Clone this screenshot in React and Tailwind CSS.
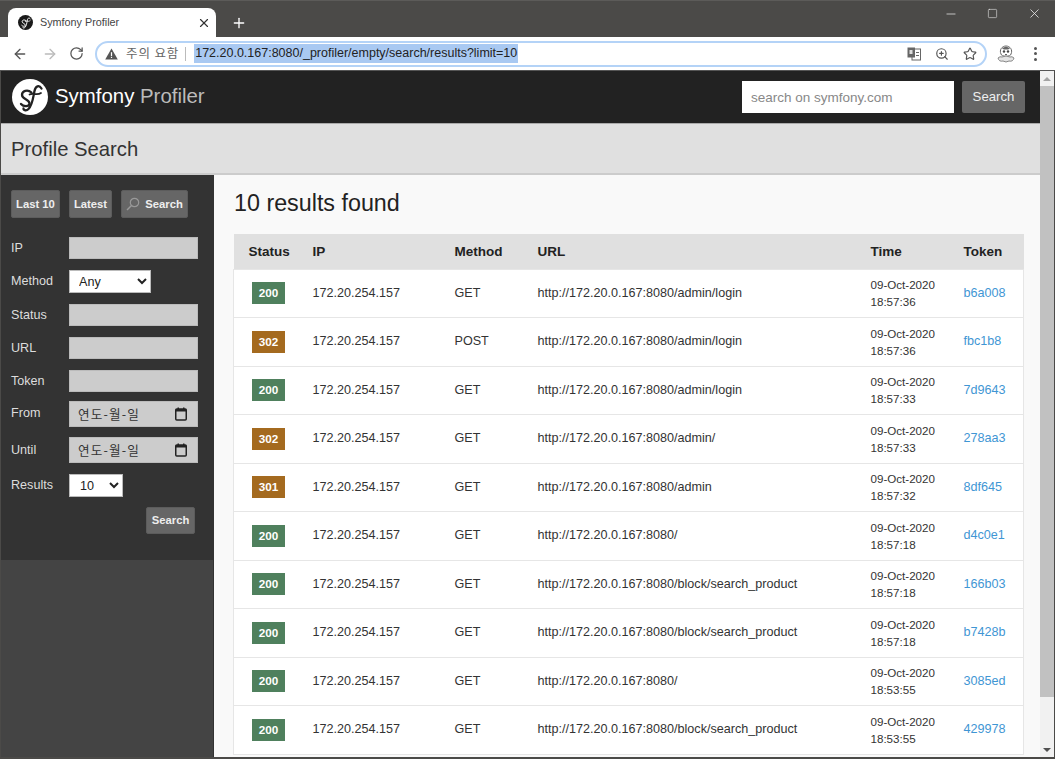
import { ArrowLeft, ArrowRight, RotateCw, Star, X, Plus, Minus, Square, ZoomIn } from "lucide-react";

const rows = [
  ["200", "GET", "/admin/login", "18:57:36", "b6a008"],
  ["302", "POST", "/admin/login", "18:57:36", "fbc1b8"],
  ["200", "GET", "/admin/login", "18:57:33", "7d9643"],
  ["302", "GET", "/admin/", "18:57:33", "278aa3"],
  ["301", "GET", "/admin", "18:57:32", "8df645"],
  ["200", "GET", "/", "18:57:18", "d4c0e1"],
  ["200", "GET", "/block/search_product", "18:57:18", "166b03"],
  ["200", "GET", "/block/search_product", "18:57:18", "b7428b"],
  ["200", "GET", "/", "18:53:55", "3085ed"],
  ["200", "GET", "/block/search_product", "18:53:55", "429978"],
];

function SfLogo({ size, dark }) {
  const bg = dark ? "#1a1a1a" : "#fff";
  const fg = dark ? "#fff" : "#222";
  return (
    <svg width={size} height={size} viewBox="0 0 36 36" className="shrink-0">
      <circle cx="18" cy="18" r="18" fill={bg} />
      <g fill="none" stroke={fg} strokeLinecap="round">
        <path d="M29.5 9.5 C27 5.5 23.5 7 22.5 12 C21 19 20.5 26 16.5 30 C14.5 32 11.5 31.5 11.5 29.5" strokeWidth="2.3" />
        <path d="M17.5 15.5 C21 13.5 25 17 29 14" strokeWidth="1.7" />
        <path d="M19.5 13.5 C15.5 10 10 12 10 16 C10 20.5 17.5 20 17.5 24.5 C17.5 28 11.5 28 9 25" strokeWidth="2.3" />
      </g>
    </svg>
  );
}

function ChromeBar() {
  return (
    <div className="shrink-0 font-['Liberation_Sans',sans-serif]">
      <div className="h-[37px] bg-[#4b4a48] border-t border-[#5c5b59] flex items-end pl-[8px] text-white">
        <div className="w-[208px] h-[29px] bg-white rounded-t-lg flex items-center pl-[10px] pr-[5px] text-[#444]">
          <SfLogo size={15} dark />
          <span className="ml-[7px] text-[10.8px] flex-1">Symfony Profiler</span>
          <X size={14} strokeWidth={2} className="text-[#333]" />
        </div>
        <Plus size={16} strokeWidth={2} className="ml-[15px] mb-[6px]" />
        <div className="ml-auto self-start flex items-center gap-[29px] pr-[13px] pt-[5px] text-[#eee]">
          <Minus size={14} strokeWidth={1.25} />
          <Square size={11} strokeWidth={1.25} />
          <X size={15} strokeWidth={1.25} />
        </div>
      </div>
      <div className="h-[34px] bg-white flex items-center pl-[12px] pr-[18px] border-b border-[#555]">
        <ArrowLeft size={16} strokeWidth={2} className="text-[#555]" />
        <ArrowRight size={16} strokeWidth={2} className="text-[#bbb] ml-[14px]" />
        <RotateCw size={15} strokeWidth={2} className="text-[#555] ml-[11px]" />
        <div className="ml-[11px] flex-1 h-[26px] rounded-full border-2 border-[#b4d3f7] flex items-center pl-[8px] pr-[8px]">
          <svg width="13" height="12" viewBox="0 0 13 12" className="shrink-0">
            <path d="M6.5 0.5 L12.8 11.5 H0.2 Z" fill="#555" />
            <rect x="5.9" y="4.2" width="1.2" height="3.8" fill="#fff" />
            <rect x="5.9" y="8.8" width="1.2" height="1.2" fill="#fff" />
          </svg>
          <span className="ml-[8px] text-[12.5px] tracking-[0.07em] text-[#666] font-['Noto_Sans_CJK_KR',sans-serif] leading-none whitespace-nowrap">주의 요함</span>
          <div className="ml-[6px] w-px h-[14px] bg-[#bbb]" />
          <span className="ml-[8px] text-[12.5px] leading-[19px] px-px bg-[#a9c9f2] text-[#222] whitespace-nowrap">
            172.20.0.167:8080/_profiler/empty/search/results?limit=10
          </span>
          <div className="ml-auto flex items-center gap-[14px] text-[#555]">
            <svg width="14" height="14" viewBox="0 0 14 14" className="shrink-0">
              <rect x="5" y="2" width="8.5" height="11" fill="#fff" stroke="#666" />
              <rect x="0.5" y="0.5" width="7.5" height="10" fill="#666" />
              <rect x="2.5" y="3" width="3" height="4" fill="#ddd" />
              <rect x="9" y="5" width="3" height="1" fill="#666" />
              <rect x="9" y="8" width="3" height="1" fill="#666" />
            </svg>
            <ZoomIn size={14} strokeWidth={2} />
            <Star size={14} strokeWidth={2} />
          </div>
        </div>
        <svg width="18" height="18" viewBox="0 0 18 18" className="ml-[10px] shrink-0">
          <path d="M4 9 C2 5 5 1 9 1 C13 1 16 5 14 9 C14 12 4 12 4 9 Z" fill="#fff" stroke="#666" />
          <circle cx="7" cy="6.5" r="1.2" fill="#444" />
          <circle cx="11" cy="6.5" r="1.2" fill="#444" />
          <path d="M5 3.5 Q9 0 13 3.5 L11 4.5 H7 Z" fill="#666" />
          <path d="M8 9.5 H10" stroke="#666" />
          <path d="M1 13 Q3 11 5 12 Q9 10 13 12 Q15 11 17 13 Q16 17 12 16 Q9 18 6 16 Q2 17 1 13 Z" fill="#e4e4e4" stroke="#888" />
        </svg>
        <div className="ml-[19px] flex flex-col gap-[2.5px]">
          <div className="w-[3px] h-[3px] rounded-full bg-[#555]" />
          <div className="w-[3px] h-[3px] rounded-full bg-[#555]" />
          <div className="w-[3px] h-[3px] rounded-full bg-[#555]" />
        </div>
      </div>
    </div>
  );
}

function SideBtn({ children, className = "" }) {
  return (
    <button
      type="button"
      className={`h-[28px] bg-[#666] border border-[#5c5c5c] rounded-[2px] text-[#eee] text-[11.25px] font-bold flex items-center justify-center ${className}`}
    >
      {children}
    </button>
  );
}

function Field({ label, mb = "mb-[11px]", labelClass = "", children }) {
  return (
    <div className={`flex items-center ${mb}`}>
      <label className={`w-[58px] text-[12.6px] text-[#ddd] ${labelClass}`}>{label}</label>
      {children}
    </div>
  );
}

function TextInput() {
  return <input className="w-[129px] h-[22px] bg-[#ccc] border border-[#bbb]" />;
}

function DateInput() {
  return (
    <div className="w-[129px] h-[26px] bg-[#ccc] border border-[#bbb] flex items-center pl-[8px] pr-[10px] text-[#333]">
      <span className="text-[12.6px] font-['Noto_Sans_CJK_KR',sans-serif] tracking-[0.09em] whitespace-nowrap">연도-월-일</span>
      <svg width="12" height="14" viewBox="0 0 12 14" className="ml-auto">
        <rect x="0.75" y="2" width="10.5" height="11" rx="1" fill="none" stroke="#222" strokeWidth="1.5" />
        <rect x="0.75" y="2" width="10.5" height="2.5" fill="#222" />
        <rect x="2.5" y="0.5" width="1.5" height="2" fill="#222" />
        <rect x="8" y="0.5" width="1.5" height="2" fill="#222" />
      </svg>
    </div>
  );
}

function Sidebar() {
  return (
    <aside className="w-[213px] shrink-0 bg-[#444] border-r border-[#333] text-[12.6px]">
      <div className="h-[385px] bg-[#333] pt-[15px] pl-[10px]">
        <div className="flex gap-[9px] mb-[19px]">
          <SideBtn className="w-[49px]">Last 10</SideBtn>
          <SideBtn className="w-[43px]">Latest</SideBtn>
          <SideBtn className="w-[67px]">
            <svg width="14" height="14" viewBox="0 0 14 14" className="mr-[5px] shrink-0">
              <circle cx="8.5" cy="5.5" r="4.2" fill="none" stroke="#999" strokeWidth="1.2" />
              <path d="M5.5 8.5 L1 13" stroke="#999" strokeWidth="1.4" />
            </svg>
            Search
          </SideBtn>
        </div>
        <Field label="IP"><TextInput /></Field>
        <Field label="Method">
          <select className="w-[82px] h-[23px] bg-white text-[#222] text-[12.6px] pl-[5px] border border-[#bbb]" defaultValue="Any">
            <option>Any</option>
          </select>
        </Field>
        <Field label="Status"><TextInput /></Field>
        <Field label="URL"><TextInput /></Field>
        <Field label="Token" mb="mb-[9px]"><TextInput /></Field>
        <Field label="From" mb="mb-[10px]" labelClass="pb-[2px]"><DateInput /></Field>
        <Field label="Until"><DateInput /></Field>
        <Field label="Results" mb="mb-[10px]">
          <select className="w-[54px] h-[23px] bg-white text-[#222] text-[12.6px] pl-[6px] border border-[#bbb]" defaultValue="10">
            <option>10</option>
          </select>
        </Field>
        <div className="flex justify-end pr-[18px]">
          <SideBtn className="w-[49px] !h-[27px]">Search</SideBtn>
        </div>
      </div>
    </aside>
  );
}

function ResultsTable() {
  return (
    <table className="w-[790px] -ml-px table-fixed border-collapse text-[12.6px] text-[#333]">
      <colgroup>
        <col className="w-[63px]" />
        <col className="w-[142px]" />
        <col className="w-[83px]" />
        <col className="w-[333px]" />
        <col className="w-[94px]" />
        <col className="w-[75px]" />
      </colgroup>
      <thead>
        <tr className="h-[35px] bg-[#e0e0e0] text-left text-[13.5px] text-[#222]">
          <th className="pl-[15px] pt-[2px] font-bold">Status</th>
          <th className="pl-[16px] pt-[2px] font-bold">IP</th>
          <th className="pl-[16px] pt-[2px] font-bold">Method</th>
          <th className="pl-[16px] pt-[2px] font-bold">URL</th>
          <th className="pl-[16px] pt-[2px] font-bold">Time</th>
          <th className="pl-[15px] pt-[2px] font-bold">Token</th>
        </tr>
      </thead>
      <tbody>
        {rows.map((r) => (
          <tr key={r[4]} className="h-[48.5px] bg-white border border-[#e6e6e6]">
            <td className="pl-[18px]">
              <span className={`inline-flex w-[33px] h-[22px] items-center justify-center text-white font-bold text-[11.7px] ${r[0] === "200" ? "bg-[#4f805d]" : "bg-[#a46a1f]"}`}>
                {r[0]}
              </span>
            </td>
            <td className="pl-[16px]">172.20.254.157</td>
            <td className="pl-[16px]">{r[1]}</td>
            <td className="pl-[16px]">http://172.20.0.167:8080{r[2]}</td>
            <td className="pl-[16px] text-[11.6px] leading-[17px]">
              09-Oct-2020<br />{r[3]}
            </td>
            <td className="pl-[15px] text-[#3f96d4]">{r[4]}</td>
          </tr>
        ))}
      </tbody>
    </table>
  );
}

function Scrollbar() {
  return (
    <div className="w-[14px] shrink-0 bg-[#f1f1f1] flex flex-col items-center">
      <div className="h-[15px] flex items-center">
        <div className="border-x-[4px] border-x-transparent border-b-[4px] border-b-[#a3a3a3]" />
      </div>
      <div className="h-[611px] w-full bg-[#c1c1c1]" />
      <div className="mt-auto h-[15px] flex items-center">
        <div className="border-x-[4px] border-x-transparent border-t-[4px] border-t-[#505050]" />
      </div>
    </div>
  );
}

export default function App() {
  return (
    <div className="h-[759px] w-[1055px] overflow-hidden flex flex-col font-['Liberation_Sans',sans-serif] bg-[#4b4a48]">
      <ChromeBar />
      <div className="flex-1 min-h-0 flex mx-px mb-[2px]">
        <div className="flex-1 min-w-0 flex flex-col overflow-hidden bg-[#f9f9f9]">
          <header className="h-[52px] shrink-0 bg-[#222] flex items-center pl-[11px] pr-[15px]">
            <SfLogo size={36} />
            <h1 className="ml-[7px] text-[20.4px] text-white -mt-[2px]">
              Symfony <span className="text-[#bbb]">Profiler</span>
            </h1>
            <input
              placeholder="search on symfony.com"
              className="ml-auto w-[212px] h-[32px] bg-white px-[9px] text-[13.5px] text-[#333] placeholder:text-[#888]"
            />
            <button type="button" className="ml-[8px] w-[63px] h-[32px] bg-[#666] rounded-[2px] text-[#eee] text-[13.2px]">
              Search
            </button>
          </header>
          <div className="h-[52px] shrink-0 bg-[#e0e0e0] border-t border-[#aaa] border-b-2 border-b-[#ccc] flex items-center pl-[10px]">
            <h2 className="text-[20.25px] text-[#333] mt-[2px]">Profile Search</h2>
          </div>
          <div className="flex-1 min-h-0 flex">
            <Sidebar />
            <main className="flex-1 min-w-0 pl-[20px] pt-[14px]">
              <h2 className="text-[23.3px] leading-[28px] text-[#222] mb-[17px]">10 results found</h2>
              <ResultsTable />
            </main>
          </div>
        </div>
        <Scrollbar />
      </div>
    </div>
  );
}
